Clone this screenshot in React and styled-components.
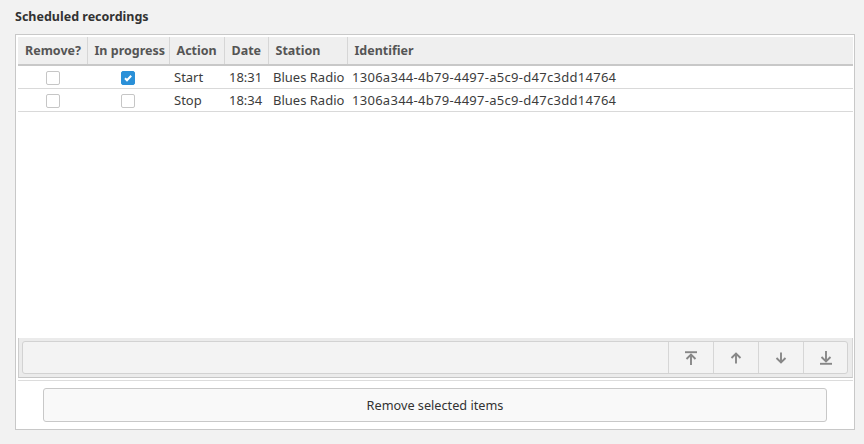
import React, { useState } from 'react';
import styled, { createGlobalStyle, css } from 'styled-components';

const GlobalStyle = createGlobalStyle`
  html, body {
    margin: 0;
    padding: 0;
    background: #f2f2f2;
  }
  body {
    font-family: "Noto Sans", "DejaVu Sans", sans-serif;
    font-size: 12.5px;
    color: #3c3c3c;
  }
`;

const Page = styled.div`
  width: 864px;
  height: 444px;
  box-sizing: border-box;
  padding: 8px 9px 14px 15px;
  display: flex;
  flex-direction: column;
`;

const Title = styled.h2`
  margin: 0 0 8px 0;
  font-size: 12.5px;
  font-weight: bold;
  color: #333;
  line-height: 18px;
  height: 18px;
`;

const Frame = styled.div`
  flex: 1;
  border: 1px solid #c8c8c8;
  background: #fff;
  padding: 2px 1px 0 2px;
  display: flex;
  flex-direction: column;
`;

const ListArea = styled.div`
  flex: 1;
  display: flex;
  flex-direction: column;
  background: #fff;
`;

const Table = styled.table`
  border-collapse: collapse;
  width: 100%;
  table-layout: fixed;
`;

const HeadCell = styled.th`
  background: #efefef;
  border-bottom: 2px solid #c8c8c8;
  border-right: 1px solid #d6d6d6;
  height: 27px;
  padding: 0 6px 0 7px;
  text-align: left;
  font-weight: bold;
  font-size: 12.5px;
  color: #555;
  white-space: nowrap;
  &:last-child {
    border-right: none;
  }
`;

const Cell = styled.td`
  height: 22px;
  padding: 0 5px;
  border-bottom: 1px solid #d9d9d9;
  white-space: nowrap;
  font-size: 13px;
  color: #3c3c3c;
  ${({ center }) =>
    center &&
    css`
      text-align: center;
      padding: 0;
    `}
  ${({ mono }) =>
    mono &&
    css`
      letter-spacing: 0.28px;
    `}
`;

const Check = styled.span`
  display: inline-block;
  box-sizing: border-box;
  width: 14px;
  height: 14px;
  border-radius: 2px;
  vertical-align: middle;
  position: relative;
  top: -1px;
  border: 1px solid #c6c6c6;
  background: #fff;
  ${({ checked }) =>
    checked &&
    css`
      border-color: #2a90d8;
      background: #2a90d8;
    `}
  svg {
    display: block;
  }
`;

const Spacer = styled.div`
  flex: 1;
`;

const ToolbarBand = styled.div`
  height: 40px;
  box-sizing: border-box;
  background: #ebebeb;
  border-left: 1px solid #cdcdcd;
  border-bottom: 1px solid #c6c6c6;
  border-right: 1px solid #d6d6d6;
  padding: 3px 4px 3px 3px;
`;

const Toolbar = styled.div`
  height: 100%;
  box-sizing: border-box;
  border: 1px solid #d2d2d2;
  border-radius: 3px;
  background: #f3f3f3;
  display: flex;
  justify-content: flex-end;
`;

const ToolButton = styled.button`
  width: 45px;
  height: 100%;
  border: none;
  border-left: 1px solid #d6d6d6;
  background: transparent;
  padding: 0;
  display: flex;
  align-items: center;
  justify-content: center;
  color: #878787;
  &:last-child {
    width: 44px;
  }
  svg {
    display: block;
  }
`;

const Footer = styled.div`
  border-top: 1px solid #dcdcdc;
  margin-top: 2px;
  padding: 7px 26px 7px 25px;
`;

const WideButton = styled.button`
  width: 100%;
  height: 34px;
  border: 1px solid #c8c8c8;
  border-radius: 3px;
  background: #f9f9f9;
  font-family: "Noto Sans", "DejaVu Sans", sans-serif;
  font-size: 12.7px;
  color: #333;
`;

const CheckBox = ({ checked }) => (
  <Check checked={checked}>
    {checked && (
      <svg width="12" height="12" viewBox="0 0 12 12">
        <path d="M3 6.2 L5 8.2 L9.2 3.8" fill="none" stroke="#fff" strokeWidth="2" />
      </svg>
    )}
  </Check>
);

// arrow icons of the move toolbar (top, up, down, bottom)
const arrowPaths = {
  top: ['M0 1.2 H12', 'M6 14 V3.5', 'M1.5 8 L6 3.5 L10.5 8'],
  up: ['M6 12.5 V2.5', 'M1.5 7 L6 2.5 L10.5 7'],
  down: ['M6 1.5 V11.5', 'M1.5 7 L6 11.5 L10.5 7'],
  bottom: ['M6 0 V10.5', 'M1.5 6 L6 10.5 L10.5 6', 'M0 12.8 H12'],
};

const Arrow = ({ kind }) => (
  <svg width="12" height="14" viewBox="0 0 12 14" fill="none" stroke="currentColor" strokeWidth="1.9">
    {arrowPaths[kind].map((d) => (
      <path key={d} d={d} />
    ))}
  </svg>
);

const rows = [
  { remove: false, progress: true, action: 'Start', date: '18:31', station: 'Blues Radio', id: '1306a344-4b79-4497-a5c9-d47c3dd14764' },
  { remove: false, progress: false, action: 'Stop', date: '18:34', station: 'Blues Radio', id: '1306a344-4b79-4497-a5c9-d47c3dd14764' },
];

const App = () => {
  const [items] = useState(rows);

  return (
    <Page>
      <GlobalStyle />
      <Title>Scheduled recordings</Title>
      <Frame>
        <ListArea>
          <Table>
            <colgroup>
              <col style={{ width: 69 }} />
              <col style={{ width: 82 }} />
              <col style={{ width: 55 }} />
              <col style={{ width: 44 }} />
              <col style={{ width: 79 }} />
              <col />
            </colgroup>
            <thead>
              <tr>
                <HeadCell>Remove?</HeadCell>
                <HeadCell>In progress</HeadCell>
                <HeadCell>Action</HeadCell>
                <HeadCell>Date</HeadCell>
                <HeadCell>Station</HeadCell>
                <HeadCell>Identifier</HeadCell>
              </tr>
            </thead>
            <tbody>
              {items.map((item, index) => (
                <tr key={`row_${index}`}>
                  <Cell center>
                    <CheckBox checked={item.remove} />
                  </Cell>
                  <Cell center>
                    <CheckBox checked={item.progress} />
                  </Cell>
                  <Cell>{item.action}</Cell>
                  <Cell>{item.date}</Cell>
                  <Cell>{item.station}</Cell>
                  <Cell mono>{item.id}</Cell>
                </tr>
              ))}
            </tbody>
          </Table>
          <Spacer />
          <ToolbarBand>
            <Toolbar>
              <ToolButton>
                <Arrow kind="top" />
              </ToolButton>
              <ToolButton>
                <Arrow kind="up" />
              </ToolButton>
              <ToolButton>
                <Arrow kind="down" />
              </ToolButton>
              <ToolButton>
                <Arrow kind="bottom" />
              </ToolButton>
            </Toolbar>
          </ToolbarBand>
        </ListArea>
        <Footer>
          <WideButton>Remove selected items</WideButton>
        </Footer>
      </Frame>
    </Page>
  );
};

export default App;
